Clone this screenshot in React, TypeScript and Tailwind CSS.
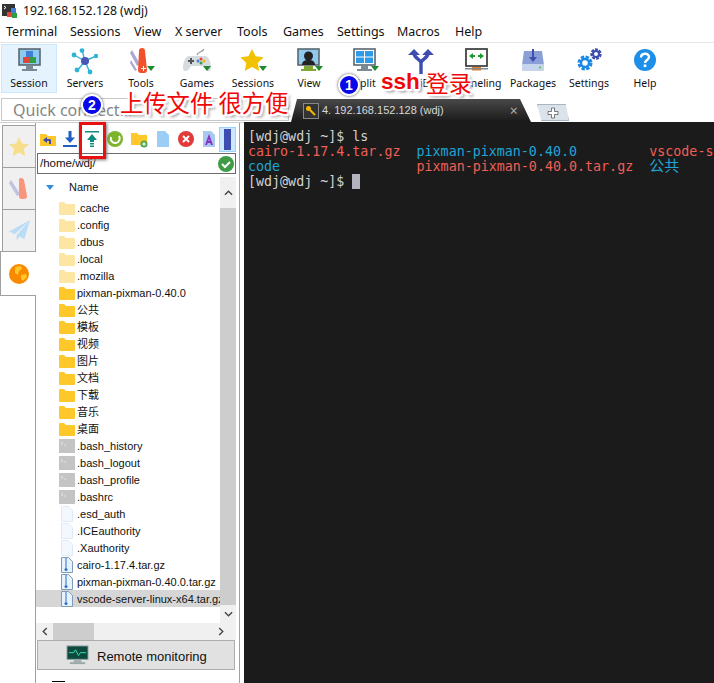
import type { ReactNode } from 'react'

const uiFont = "font-['Noto_Sans','Noto_Sans_CJK_SC',sans-serif]"
const treeFont = "font-['Liberation_Sans','Noto_Sans_CJK_SC',sans-serif]"

const Ico = ({ children }: { children: ReactNode }) => (
  <svg viewBox="0 0 32 28" className="w-8 h-7 block">
    {children}
  </svg>
)

const Corner = () => <path d="M25 18h8l-4 5z" fill="#1f8a2e" transform="translate(-3 0)" />

const toolbarItems: { label: string; icon: ReactNode }[] = [
  {
    label: 'Session',
    icon: (
      <Ico>
        <rect x="6" y="1" width="21" height="16" fill="#8ec9ee" stroke="#5b6770" strokeWidth="1.6" />
        <path d="M13 18h7v3h4v2H9v-2h4z" fill="#7b8a93" />
        <rect x="13" y="3" width="7" height="6" fill="#3f7fd6" />
        <rect x="10" y="9" width="6" height="6" fill="#e0453a" />
        <rect x="16" y="9" width="7" height="6" fill="#2f9e44" />
      </Ico>
    ),
  },
  {
    label: 'Servers',
    icon: (
      <Ico>
        <path d="M16 13L5 7M16 13L13 2M16 13L27 8M16 13L8 23M16 13L21 25" stroke="#2fb4d8" strokeWidth="1.4" />
        <circle cx="16" cy="13" r="4" fill="#4a55b8" />
        <circle cx="5" cy="7" r="2.4" fill="#2fb4d8" />
        <circle cx="13" cy="2.6" r="2.4" fill="#2fb4d8" />
        <circle cx="27" cy="8" r="2.2" fill="#2fb4d8" />
        <circle cx="8" cy="22" r="2.4" fill="#2fb4d8" />
        <circle cx="21" cy="24" r="2.4" fill="#2fb4d8" />
      </Ico>
    ),
  },
  {
    label: 'Tools',
    icon: (
      <Ico>
        <path d="M7 2l8 14-3 2L5 5zM6 12l6 10-2 1-5-8z" fill="#a9a9d6" />
        <path d="M14 3a3 3 0 0 1 6 0l2 19a3 3 0 0 1-3 3h-3a3 3 0 0 1-3-3z" fill="#f0502a" />
        <path d="M16 20h2v-2h1v2h2v1h-2v2h-1v-2h-2z" fill="#fff" />
        <Corner />
      </Ico>
    ),
  },
  {
    label: 'Games',
    icon: (
      <Ico>
        <path d="M16 7C17 3 21 5 23 1" stroke="#8b969e" strokeWidth="1.2" fill="none" />
        <path d="M8 8h16c4 0 6 7 6 12 0 4-4 4-6 1l-2-3H10l-2 3c-2 3-6 3-6-1 0-5 2-12 6-12z" fill="#d6dbe0" />
        <rect x="7" y="12" width="6" height="2" fill="#555" />
        <rect x="9" y="10" width="2" height="6" fill="#555" />
        <circle cx="20" cy="11" r="1.5" fill="#e0453a" />
        <circle cx="23" cy="13" r="1.5" fill="#f2b705" />
        <circle cx="17" cy="13" r="1.5" fill="#3f7fd6" />
        <circle cx="20" cy="15" r="1.5" fill="#2f9e44" />
        <Corner />
      </Ico>
    ),
  },
  {
    label: 'Sessions',
    icon: (
      <Ico>
        <path d="M15 1l3.6 7.2 8 1.1-5.8 5.6 1.4 8L15 19l-7.2 3.9 1.4-8L3.4 9.3l8-1.1z" fill="#f2c200" />
        <Corner />
      </Ico>
    ),
  },
  {
    label: 'View',
    icon: (
      <Ico>
        <rect x="5" y="1" width="21" height="16" fill="#8ec9ee" stroke="#5b6770" strokeWidth="1.6" />
        <circle cx="15.5" cy="8" r="4.5" fill="#222" />
        <path d="M9 17c0-4 3-5 6.500-5s6.500 1 6.500 5z" fill="#222" />
        <path d="M11 18h9v3h3v2H8v-2h3z" fill="#7fa832" />
        <Corner />
      </Ico>
    ),
  },
  {
    label: 'Split',
    icon: (
      <Ico>
        <rect x="5" y="1" width="21" height="16" fill="#fff" stroke="#5b6770" strokeWidth="1.6" />
        <rect x="7" y="3" width="8" height="5.500" fill="#2f9ae8" />
        <rect x="16" y="3" width="8" height="5.500" fill="#2f9ae8" />
        <rect x="7" y="9.500" width="8" height="5.500" fill="#2f9ae8" />
        <rect x="16" y="9.500" width="8" height="5.500" fill="#2f9ae8" />
        <path d="M12 18h7v3h4v2H8v-2h4z" fill="#7b8a93" />
        <Corner />
      </Ico>
    ),
  },
  {
    label: 'MultiExec',
    icon: (
      <Ico>
        <path d="M16 26V15C16 11 9 11 9 5M16 15c0-4 7-4 7-10" stroke="#3d4db0" strokeWidth="3.400" fill="none" />
        <path d="M3 7l6-6 6 6zM17 7l6-6 6 6z" fill="#3d4db0" />
      </Ico>
    ),
  },
  {
    label: 'Tunneling',
    icon: (
      <Ico>
        <rect x="5" y="1" width="21" height="17" fill="#fff" stroke="#444" strokeWidth="1.8" />
        <path d="M8 8l4-3v2h2v2h-2v2zM23 8l-4-3v2h-2v2h2v2z" fill="#1f9a2e" />
        <rect x="11" y="19" width="9" height="3.500" fill="#f07a1a" />
        <rect x="4" y="20" width="23" height="1.500" fill="#7b8a93" />
      </Ico>
    ),
  },
  {
    label: 'Packages',
    icon: (
      <Ico>
        <path d="M7 3h18l2 14H5z" fill="#8a9fd6" />
        <rect x="5" y="16" width="22" height="7" rx="1" fill="#c6d4ee" />
        <rect x="22" y="18.500" width="2" height="2" fill="#5fd04a" />
        <path d="M15 1h2v8h3l-4 5-4-5h3z" fill="#3d4db0" />
      </Ico>
    ),
  },
  {
    label: 'Settings',
    icon: (
      <Ico>
        <circle cx="12" cy="15" r="5.500" fill="none" stroke="#1e88e5" strokeWidth="4" strokeDasharray="3 1.300" />
        <circle cx="12" cy="15" r="4" fill="none" stroke="#1e88e5" strokeWidth="2.400" />
        <circle cx="23" cy="6" r="4" fill="none" stroke="#3d4db0" strokeWidth="3.400" strokeDasharray="2.500 1" />
        <circle cx="23" cy="6" r="3" fill="none" stroke="#3d4db0" strokeWidth="2" />
      </Ico>
    ),
  },
  {
    label: 'Help',
    icon: (
      <Ico>
        <circle cx="16" cy="12" r="11" fill="#1e8fe8" />
        <path d="M12 9.500c0-5 8-5 8-.500 0 3-4 3-4 6" stroke="#fff" strokeWidth="2.400" fill="none" />
        <rect x="14.700" y="16.500" width="2.600" height="2.600" fill="#fff" />
      </Ico>
    ),
  },
]

const menus = [
  ['Terminal', 'w-[64px]'],
  ['Sessions', 'w-[64px]'],
  ['View', 'w-[41px]'],
  ['X server', 'w-[62px]'],
  ['Tools', 'w-[46px]'],
  ['Games', 'w-[54px]'],
  ['Settings', 'w-[60px]'],
  ['Macros', 'w-[58px]'],
  ['Help', 'w-[40px]'],
]

const Folder = ({ pale }: { pale?: boolean }) => (
  <svg viewBox="0 0 16 14" className="w-4 h-[14px] block">
    <path
      d="M0 2a1 1 0 0 1 1-1h4l2 2h8a1 1 0 0 1 1 1v9a1 1 0 0 1-1 1H1a1 1 0 0 1-1-1z"
      fill={pale ? '#fde5a4' : '#fec72a'}
    />
  </svg>
)

const Shell = () => (
  <svg viewBox="0 0 16 14" className="w-4 h-[14px] block">
    <rect width="16" height="14" fill="#c4c4c4" />
    <path d="M2 3l2 1.500L2 6M5 6h2" stroke="#e4efe4" strokeWidth=".8" fill="none" />
  </svg>
)

const Doc = () => (
  <svg viewBox="0 0 16 16" className="w-4 h-4 block">
    <path d="M2.500.5h7l4 4v11h-11z" fill="#f3f8fe" stroke="#e0ebf6" />
  </svg>
)

const Archive = () => (
  <svg viewBox="0 0 16 16" className="w-4 h-4 block">
    <path d="M2.500.5h7l4 4v11h-11z" fill="#e6f2fc" stroke="#7f9bb8" />
    <path d="M7 1v10" stroke="#2f6fc9" />
    <circle cx="7" cy="12.500" r="1.500" fill="#2f6fc9" />
  </svg>
)

type Row = { name: string; kind: 'pale' | 'folder' | 'shell' | 'doc' | 'archive'; selected?: boolean }

const rows: Row[] = [
  { name: '.cache', kind: 'pale' },
  { name: '.config', kind: 'pale' },
  { name: '.dbus', kind: 'pale' },
  { name: '.local', kind: 'pale' },
  { name: '.mozilla', kind: 'pale' },
  { name: 'pixman-pixman-0.40.0', kind: 'folder' },
  { name: '公共', kind: 'folder' },
  { name: '模板', kind: 'folder' },
  { name: '视频', kind: 'folder' },
  { name: '图片', kind: 'folder' },
  { name: '文档', kind: 'folder' },
  { name: '下载', kind: 'folder' },
  { name: '音乐', kind: 'folder' },
  { name: '桌面', kind: 'folder' },
  { name: '.bash_history', kind: 'shell' },
  { name: '.bash_logout', kind: 'shell' },
  { name: '.bash_profile', kind: 'shell' },
  { name: '.bashrc', kind: 'shell' },
  { name: '.esd_auth', kind: 'doc' },
  { name: '.ICEauthority', kind: 'doc' },
  { name: '.Xauthority', kind: 'doc' },
  { name: 'cairo-1.17.4.tar.gz', kind: 'archive' },
  { name: 'pixman-pixman-0.40.0.tar.gz', kind: 'archive' },
  { name: 'vscode-server-linux-x64.tar.gz', kind: 'archive', selected: true },
]

const RowIcon = ({ kind }: { kind: Row['kind'] }) => {
  if (kind === 'pale') return <Folder pale />
  if (kind === 'folder') return <Folder />
  if (kind === 'shell') return <Shell />
  if (kind === 'doc') return <Doc />
  return <Archive />
}

const SideTab = ({ children, active }: { children: ReactNode; active?: boolean }) => (
  <div
    className={
      active
        ? 'h-[45px] w-[36px] bg-white border-y border-l border-[#a0a0a0] flex items-center justify-center -ml-[2px] relative z-10'
        : 'h-[42px] w-[33px] bg-[#f0f0f0] border-t border-l border-[#a0a0a0] flex items-center justify-center'
    }
  >
    {children}
  </div>
)

const panelIcons: { width: string; icon: ReactNode }[] = [
  {
    width: 'w-[22px]',
    icon: (
      <svg viewBox="0 0 18 18" className="w-[18px] h-[18px]">
        <path d="M1 4h6l2 2h8v10H1z" fill="#fec72a" />
        <path d="M8 7l-4 3 4 3v-2h2v3h2v-4a1 1 0 0 0-1-1H8z" fill="#3d4db0" />
      </svg>
    ),
  },
  {
    width: 'w-[22px]',
    icon: (
      <svg viewBox="0 0 18 18" className="w-[18px] h-[18px]">
        <path d="M7.500 1h3v6.500H14L9 13 4 7.500h3.500z" fill="#1d5fc4" />
        <rect x="2" y="15" width="14" height="2" fill="#1d5fc4" />
      </svg>
    ),
  },
  {
    width: 'w-[22px]',
    icon: (
      <svg viewBox="0 0 18 18" className="w-[18px] h-[18px]">
        <rect x="2" y="1" width="14" height="1.500" fill="#0f8a7e" />
        <path d="M9 4l5 6h-3v2H7v-2H4z" fill="#0f8a7e" />
        <rect x="7" y="13" width="4" height="1.500" fill="#0f8a7e" />
        <rect x="7" y="15.500" width="4" height="1.500" fill="#0f8a7e" />
      </svg>
    ),
  },
  {
    width: 'w-[24px]',
    icon: (
      <svg viewBox="0 0 18 18" className="w-[18px] h-[18px]">
        <circle cx="9" cy="9" r="8" fill="#7cb52a" />
        <path d="M5 7a4.500 4.500 0 1 0 8-1" stroke="#fff" strokeWidth="2" fill="none" />
      </svg>
    ),
  },
  {
    width: 'w-[24px]',
    icon: (
      <svg viewBox="0 0 18 18" className="w-[18px] h-[18px]">
        <path d="M1 3h6l2 2h8v10H1z" fill="#fec72a" />
        <circle cx="14" cy="14" r="3.500" fill="#4aa84a" />
        <path d="M12 14h4M14 12v4" stroke="#fff" />
      </svg>
    ),
  },
  {
    width: 'w-[23px]',
    icon: (
      <svg viewBox="0 0 18 18" className="w-[18px] h-[18px]">
        <path d="M3 1h8l4 4v12H3z" fill="#9ccdf5" />
      </svg>
    ),
  },
  {
    width: 'w-[23px]',
    icon: (
      <svg viewBox="0 0 18 18" className="w-[18px] h-[18px]">
        <circle cx="9" cy="9" r="8" fill="#e2393b" />
        <path d="M6 6l6 6M12 6l-6 6" stroke="#fff" strokeWidth="2" />
      </svg>
    ),
  },
  {
    width: 'w-[23px]',
    icon: (
      <svg viewBox="0 0 18 18" className="w-[18px] h-[18px]">
        <path d="M3 1h8l4 4v12H3z" fill="#a7c8ef" />
        <path d="M5 15l4-11 4 11h-2l-.7-2H7.700L7 15zM8.300 11h1.400L9 9z" fill="#8a2fc4" />
      </svg>
    ),
  },
]

const Annotations = () => (
  <>
    <div className="absolute left-[338px] top-[74px] w-[22px] h-[22px] rounded-full bg-[#0808e8] border-2 border-white text-white text-[14px] font-bold flex items-center justify-center font-['Liberation_Sans',sans-serif] shadow-[0_0_3px_#555]">
      1
    </div>
    <div className="absolute left-[81px] top-[94px] w-[22px] h-[22px] rounded-full bg-[#0808e8] border-2 border-white text-white text-[14px] font-bold flex items-center justify-center font-['Liberation_Sans',sans-serif] shadow-[0_0_3px_#555]">
      2
    </div>
    <div className="absolute left-[381px] top-[67px] flex items-center gap-[6px] text-[#f00808] leading-[30px] whitespace-nowrap [text-shadow:0_0_2px_#fff,2px_0_1px_#fff,-2px_0_1px_#fff,0_2px_1px_#fff,0_-2px_1px_#fff,2px_2px_1px_#fff,-2px_-2px_1px_#fff,2px_-2px_1px_#fff,-2px_2px_1px_#fff,3px_3px_3px_#777]">
      <span className="text-[22.5px] font-bold font-['Liberation_Sans',sans-serif]">ssh</span>
      <span className="text-[23px] font-['Noto_Sans_CJK_SC',sans-serif]">登录</span>
    </div>
    <div className="absolute left-[120px] top-[87px] text-[#f00808] text-[23.3px] leading-[30px] whitespace-nowrap font-['Noto_Sans_CJK_SC',sans-serif] [text-shadow:0_0_2px_#fff,2px_0_1px_#fff,-2px_0_1px_#fff,0_2px_1px_#fff,0_-2px_1px_#fff,2px_2px_1px_#fff,-2px_-2px_1px_#fff,2px_-2px_1px_#fff,-2px_2px_1px_#fff,3px_3px_3px_#777]">
      上传文件 很方便
    </div>
    <div className="absolute left-[79px] top-[122px] w-[27px] h-[37px] border-[3px] border-[#e81010] shadow-[1px_1px_3px_#777]" />
  </>
)

export default function App() {
  return (
    <div className={`relative w-[714px] h-[683px] overflow-hidden bg-white text-[#111] ${uiFont}`}>
      {/* Title bar */}
      <div className="h-[22px] flex items-center pl-[2px]">
        <svg viewBox="0 0 16 16" className="w-4 h-4">
          <rect width="13" height="12" y="1" fill="#333" />
          <path d="M2 3l2 1.500L2 6" stroke="#fff" fill="none" />
          <rect x="9" y="5" width="5" height="5" fill="#3f7fd6" />
          <rect x="5" y="9" width="5" height="5" fill="#e0453a" />
          <rect x="10" y="10" width="5" height="5" fill="#2f9e44" />
        </svg>
        <span className="ml-[5px] text-[12.25px]">192.168.152.128 (wdj)</span>
      </div>

      {/* Menu */}
      <div className="h-[21px] flex items-center pl-[6px] border-b border-[#e6e6e6] text-[12.5px]">
        {menus.map(([name, width]) => (
          <span key={name} className={width}>
            {name}
          </span>
        ))}
      </div>

      {/* Toolbar */}
      <div className="h-[50px] flex pl-px pt-px text-[10.5px] leading-[14px]">
        {toolbarItems.map((item, i) => (
          <div
            key={item.label}
            className={`w-[56px] h-[49px] flex flex-col items-center pt-[3px] border ${
              i === 0 ? 'bg-[#e5f3ff] border-[#cce8ff]' : 'border-transparent'
            }`}
          >
            {item.icon}
            <span className="whitespace-nowrap">{item.label}</span>
          </div>
        ))}
      </div>

      {/* Quick connect + tabs */}
      <div className="h-[29px] flex items-end">
        <div className="ml-px mb-[1px] w-[288px] h-[23px] border border-[#c8c8c8] pl-[11px] flex items-center text-[16px] text-[#858585]">
          Quick connect...
        </div>
        <div className="ml-[2px] w-[240px] h-[23px] flex items-center bg-gradient-to-b from-[#4a4a4a] to-[#1a1a1a] rounded-t-[4px] [clip-path:polygon(6px_0,229px_0,240px_100%,0_100%)] pl-[12px] text-[#d8d8d8]">
          <span className="w-[16px] h-[16px] border border-[#888] bg-[#333] flex items-center justify-center">
            <svg viewBox="0 0 12 12" className="w-3 h-3">
              <circle cx="3.500" cy="3.500" r="2.500" fill="#f2b705" />
              <path d="M5 5l5 5" stroke="#f2b705" strokeWidth="2" />
            </svg>
          </span>
          <span className="ml-[3px] font-['Liberation_Sans',sans-serif] text-[11px]">4. 192.168.152.128 (wdj)</span>
          <span className="ml-[66px] text-[14px] leading-none text-[#aaa]">×</span>
        </div>
        <div className="ml-[6px] mb-[1px] w-[32px] h-[17px] bg-[#dbe2ea] border border-[#a8b6c4] [clip-path:polygon(0_0,90%_0,100%_100%,14%_100%)] flex items-center justify-center">
          <svg viewBox="0 0 12 12" className="w-3 h-3">
            <path d="M4.500 1h3v3.500H11v3H7.500V11h-3V7.500H1v-3h3.500z" fill="#fff" stroke="#777" />
          </svg>
        </div>
      </div>

      {/* Main */}
      <div className="h-[561px] flex border-t border-[#d0d0d0]">
        <div className="w-[35px] pl-[2px] pt-[2px] flex flex-col shrink-0">
          <SideTab>
            <svg viewBox="0 0 24 24" className="w-6 h-6">
              <path d="M12 2l3 6.500 7 .8-5.200 4.800 1.400 7L12 17.500 5.800 21l1.400-7L2 9.300l7-.8z" fill="#f7de8c" />
            </svg>
          </SideTab>
          <SideTab>
            <svg viewBox="0 0 24 24" className="w-6 h-6">
              <path d="M4 3l9 14-3 2L2 6z" fill="#c0c0e0" />
              <path d="M12 2a3 3 0 0 1 5 1l3 16a3 3 0 0 1-3 3h-2a3 3 0 0 1-3-3z" fill="#f8957a" />
            </svg>
          </SideTab>
          <SideTab>
            <svg viewBox="0 0 24 24" className="w-[23px] h-[23px]">
              <path d="M23 1L1 13l6 3zM23 1L9 17v6l3-5 5 3z" fill="#b9dcf7" />
            </svg>
          </SideTab>
          <SideTab active>
            <svg viewBox="0 0 20 20" className="w-5 h-5">
              <circle cx="10" cy="10" r="10" fill="#f98a00" />
              <path d="M6 3l6-1 1 3-3 2-1 4-3-2zM12 11l5-1 1 3-4 4-2-2z" fill="#ffc629" />
            </svg>
          </SideTab>
          <div className="flex-1" />
        </div>

        <div className={`w-[205px] shrink-0 border-x border-[#a0a0a0] flex flex-col ${treeFont}`}>
          {/* Panel toolbar */}
          <div className="h-[30px] flex items-center pl-px pt-[2px]">
            {panelIcons.map((item, i) => (
              <span key={i} className={`${item.width} flex justify-center`}>
                {item.icon}
              </span>
            ))}
            <span className="ml-[-1px] w-[17px] h-[25px] bg-[#cce8ff] border border-[#99d1ff] flex items-center justify-center">
              <span className="w-[7px] h-[21px] bg-[#3d4db0]" />
            </span>
          </div>

          {/* Path */}
          <div className="ml-px w-[199px] h-[21px] border border-[#6b6b6b] flex items-center justify-between pl-[2px] pr-px text-[11.5px]">
            <span>/home/wdj/</span>
            <svg viewBox="0 0 16 16" className="w-4 h-4">
              <circle cx="8" cy="8" r="8" fill="#3f9b45" />
              <path d="M4 8l3 3 5-5" stroke="#fff" strokeWidth="2" fill="none" />
            </svg>
          </div>

          {/* Tree */}
          <div className="mt-[3px] h-[446px] flex">
            <div className="w-[184px] shrink-0 overflow-hidden">
              <div className="h-[22px] flex items-center pl-[10px] pb-[2px] text-[11px]">
                <svg viewBox="0 0 8 5" className="w-2 h-[5px]">
                  <path d="M0 0h8L4 5z" fill="#2f8fe0" />
                </svg>
                <span className="ml-[15px]">Name</span>
              </div>
              {rows.map((row) => (
                <div
                  key={row.name}
                  className={`h-[17px] flex items-center pl-[22px] whitespace-nowrap text-[11px] ${
                    row.selected ? 'bg-[#d6d6d6]' : ''
                  }`}
                >
                  <span className="w-[18px] shrink-0 flex justify-center">
                    <RowIcon kind={row.kind} />
                  </span>
                  <span className="ml-px pt-px">{row.name}</span>
                </div>
              ))}
            </div>
            <div className="w-[16px] shrink-0 bg-[#f0f0f0] flex flex-col">
              <div className="h-[31px] flex items-center justify-center text-[#444]">
                <svg viewBox="0 0 10 6" className="w-[9px] h-[6px]">
                  <path d="M1 5l4-4 4 4" stroke="#444" strokeWidth="1.500" fill="none" />
                </svg>
              </div>
              <div className="h-[397px] bg-[#cdcdcd]" />
              <div className="flex-1 flex items-center justify-center">
                <svg viewBox="0 0 10 6" className="w-[9px] h-[6px]">
                  <path d="M1 1l4 4 4-4" stroke="#444" strokeWidth="1.500" fill="none" />
                </svg>
              </div>
            </div>
          </div>

          {/* Horizontal scrollbar */}
          <div className="w-[200px] h-[17px] bg-[#f0f0f0] flex items-center">
            <div className="w-[17px] flex justify-center">
              <svg viewBox="0 0 6 10" className="w-[6px] h-[9px]">
                <path d="M5 1L1 5l4 4" stroke="#444" strokeWidth="1.500" fill="none" />
              </svg>
            </div>
            <div className="w-[41px] h-full bg-[#cdcdcd]" />
            <div className="flex-1" />
            <div className="w-[30px] flex justify-center">
              <svg viewBox="0 0 6 10" className="w-[6px] h-[9px]">
                <path d="M1 1l4 4-4 4" stroke="#444" strokeWidth="1.500" fill="none" />
              </svg>
            </div>
          </div>

          {/* Remote monitoring */}
          <div className="ml-px w-[198px] h-[30px] bg-[#e1e1e1] border border-[#adadad] flex items-center pl-[28px] text-[13px]">
            <svg viewBox="0 0 24 22" className="w-[23px] h-[21px]">
              <rect x="1" y="1" width="22" height="14" fill="#0d4a3e" stroke="#8fa0a0" />
              <path d="M3 8h5l2-3 3 6 2-3h6" stroke="#3be0b0" fill="none" />
              <rect x="8" y="16" width="8" height="2" fill="#9aa8a8" />
              <rect x="4" y="18" width="16" height="2" fill="#9aa8a8" />
            </svg>
            <span className="ml-[8px] pt-[3px]">Remote monitoring</span>
          </div>
          <div className="mt-[11px] ml-[16px] w-[13px] h-px bg-black" />
        </div>

        {/* Terminal */}
        <div className="ml-[4px] -mt-px flex-1 bg-[#1b1b1b] pl-[4px] pt-[7px] font-['DejaVu_Sans_Mono','Noto_Sans_CJK_SC',monospace] text-[13.33px] leading-[15px] text-[#d2d2d2] overflow-hidden whitespace-pre">
          <div>[wdj@wdj ~]$ ls</div>
          <div>
            <span className="text-[#ef5f56]">cairo-1.17.4.tar.gz</span>
            {'  '}
            <span className="text-[#1fa5d6]">pixman-pixman-0.40.0</span>
            {'         '}
            <span className="text-[#ef5f56]">vscode-server-linux-x64.tar.gz</span>
          </div>
          <div>
            <span className="text-[#1fa5d6]">code</span>
            {'                 '}
            <span className="text-[#ef5f56]">pixman-pixman-0.40.0.tar.gz</span>
            {'  '}
            <span className="text-[#1fa5d6] text-[15px]">公共</span>
          </div>
          <div className="flex">
            <span>[wdj@wdj ~]$ </span>
            <span className="w-2 h-[15px] bg-[#b4b4c0]" />
          </div>
        </div>
      </div>

      <Annotations />
    </div>
  )
}
